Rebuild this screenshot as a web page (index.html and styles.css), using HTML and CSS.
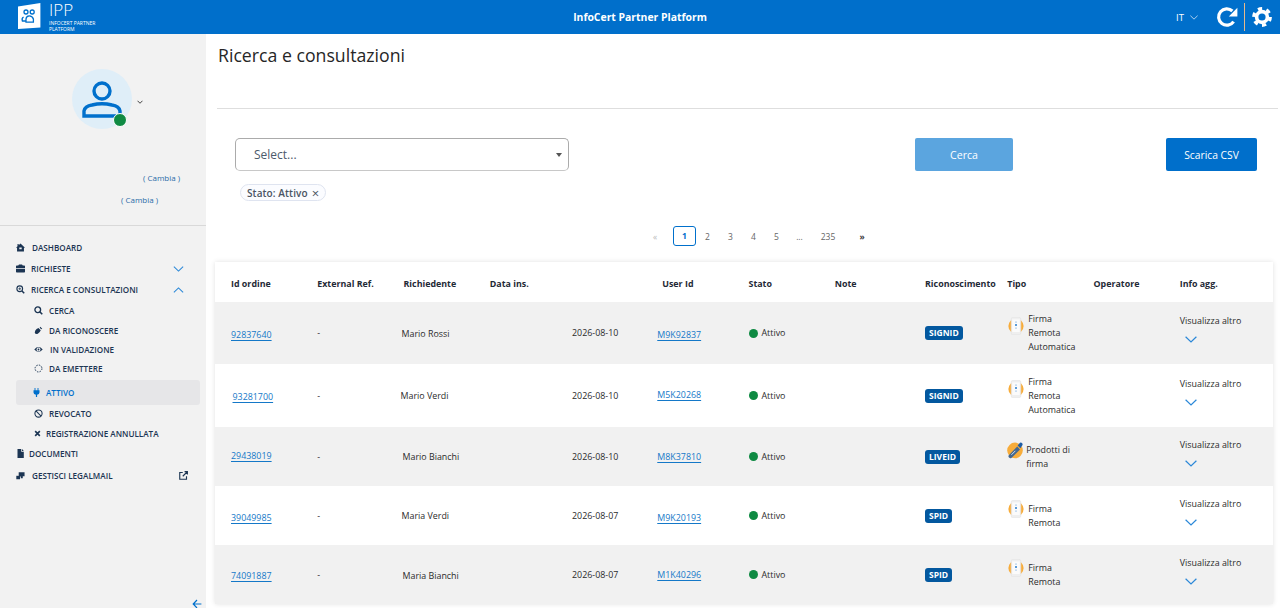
FILE: index.html
```html
<!DOCTYPE html>
<html lang="it">
<head>
    <meta charset="UTF-8">
    <meta name="viewport" content="width=device-width, initial-scale=1.0">
    <title>InfoCert Partner Platform</title>
    <link rel="stylesheet" href="styles.css">
</head>
<body>
    <svg class="defs" width="0" height="0">
        <symbol id="phone" viewBox="0 0 16 18">
            <circle cx="8" cy="9" r="7.6" fill="#f7ac3a"/>
            <rect x="3.2" y="0.4" width="9.6" height="17.2" rx="1.6" fill="#efefef" stroke="#e2e2e2" stroke-width="0.6"/>
            <rect x="4.2" y="2.4" width="7.6" height="12.6" fill="#fbfbfb"/>
            <rect x="7" y="4.6" width="2" height="1" fill="#a9c8e8"/>
            <rect x="7" y="7" width="2" height="2" fill="#5b9bd8"/>
            <rect x="7" y="10.6" width="2" height="1" fill="#a9c8e8"/>
        </symbol>
        <symbol id="usb" viewBox="0 0 16 18">
            <circle cx="8" cy="9.4" r="7.8" fill="#f7ac3a"/>
            <path d="M1.6 14.4 L10.2 5.6 L13 8.4 L4.4 17 Q3 17.6 2 16.6 Q1.2 15.6 1.6 14.4Z" fill="#44678e"/>
            <path d="M10.6 4.4 L13 1.8 Q14 1 15 2 L15.6 3 Q15.8 4 15 4.8 L13.4 7.2Z" fill="#1f5da6"/>
            <path d="M4.4 13.8 L8.4 9.8" stroke="#cfe0ef" stroke-width="1"/>
        </symbol>
        <symbol id="chev-down" viewBox="0 0 12 7">
            <path d="M0.6 0.8 L6 6 L11.4 0.8" fill="none" stroke="currentColor" stroke-width="1.2"/>
        </symbol>
        <symbol id="chev-up" viewBox="0 0 12 7">
            <path d="M0.6 6.2 L6 1 L11.4 6.2" fill="none" stroke="currentColor" stroke-width="1.2"/>
        </symbol>
    </svg>

    <header class="topbar">
        <div class="brand">
            <svg class="brand-logo" viewBox="0 0 23 26" width="23" height="26">
                <path d="M0 3.6 L22.4 0 V24.4 L0 26Z" fill="#fff"/>
                <g fill="none" stroke="#0070cc" stroke-width="1.3">
                    <circle cx="8" cy="9" r="2"/>
                    <circle cx="14.2" cy="9" r="2"/>
                    <path d="M5.6 14 Q3.4 15 4.4 18 H8"/>
                    <path d="M8 19.2 V16 Q8.4 12.8 11.2 12.8 Q14.4 12.8 15.4 16 V19.2Z"/>
                </g>
            </svg>
            <div class="brand-text">
                <div class="brand-name">IPP</div>
                <div class="brand-sub">INFOCERT PARTNER<br>PLATFORM</div>
            </div>
        </div>
        <div class="topbar-title">InfoCert Partner Platform</div>
        <div class="topbar-tools">
            <span class="lang">IT</span>
            <svg class="lang-chev" width="8" height="5"><use href="#chev-down"/></svg>
            <svg class="refresh" viewBox="0 0 22 22" width="22" height="22">
                <path d="M17.6 15.6 A8.2 8.2 0 1 1 16.4 5" fill="none" stroke="#fff" stroke-width="3.2"/>
                <path d="M21.4 1.8 V10.4 H12.8Z" fill="#fff"/>
            </svg>
            <span class="tool-sep"></span>
            <svg class="gear" viewBox="0 0 20 20" width="20" height="20">
                <circle cx="10" cy="10" r="5.4" fill="none" stroke="#fff" stroke-width="3.6"/>
                <circle cx="10" cy="10" r="8.2" fill="none" stroke="#fff" stroke-width="3.4" stroke-dasharray="4.2 4.38"/>
            </svg>
        </div>
    </header>

    <div class="layout">
        <aside class="sidebar">
            <div class="profile">
                <div class="avatar-line">
                    <div class="avatar">
                        <svg viewBox="0 0 60 60" width="60" height="60">
                            <circle cx="30" cy="22" r="8" fill="none" stroke="#0070cc" stroke-width="3.4"/>
                            <path d="M12 47 V42 Q13 37 20 36 Q30 33.5 40 36 Q47 37 48 42 V47Z" fill="none" stroke="#0070cc" stroke-width="3.4"/>
                        </svg>
                        <span class="avatar-dot"></span>
                    </div>
                    <svg class="avatar-chev" width="6" height="4" viewBox="0 0 12 7"><path d="M1 1 L6 6 L11 1" fill="none" stroke="#444" stroke-width="2"/></svg>
                </div>
                <div class="change change-a">( Cambia )</div>
                <div class="change change-b">( Cambia )</div>
            </div>

            <nav class="menu">
                <a class="item item-dash">
                    <svg class="ico" viewBox="0 0 12 12"><path d="M6 0.6 L12 6.2 H10.6 V11.4 H1.4 V6.2 H0 L2 4.4 V1.2 H3.6 V3Z M4.4 6 V8.4 H7.6 V6Z" fill-rule="evenodd"/></svg>
                    DASHBOARD
                </a>
                <a class="item item-req">
                    <svg class="ico" viewBox="0 0 12 12"><path d="M4 0.6 H8 L9 2 H11 Q12 2 12 3 V5.6 H0 V3 Q0 2 1 2 H3Z M0 6.6 H12 V10.4 Q12 11.4 11 11.4 H1 Q0 11.4 0 10.4Z"/></svg>
                    RICHIESTE
                    <svg class="item-chev" width="11" height="6"><use href="#chev-down"/></svg>
                </a>
                <a class="item item-req">
                    <svg class="ico" viewBox="0 0 12 12"><circle cx="5" cy="5" r="3.8" fill="none" stroke="currentColor" stroke-width="1.5"/><path d="M8 8 L11 11" stroke="currentColor" stroke-width="2"/><path d="M3.2 5 H6.8 M5 3.2 V6.8" stroke="currentColor"/></svg>
                    RICERCA E CONSULTAZIONI
                    <svg class="item-chev" width="11" height="6"><use href="#chev-up"/></svg>
                </a>
                <a class="sub sub-cerca">
                    <svg class="ico" viewBox="0 0 12 12"><circle cx="5" cy="5" r="3.8" fill="none" stroke="currentColor" stroke-width="1.8"/><path d="M8 8 L11 11" stroke="currentColor" stroke-width="2.2"/></svg>
                    CERCA
                </a>
                <a class="sub sub-ric">
                    <svg class="ico" viewBox="0 0 12 12"><path d="M1 9 Q1 6 3.4 4 L6 2.6 L9 5.6 Q8 8.6 5 10.4 Q2 11.4 1 9Z"/><path d="M8.4 1 L11 3.6 L9.6 4.4 L7.6 2.4Z"/></svg>
                    DA RICONOSCERE
                </a>
                <a class="sub sub-val">
                    <svg class="ico" viewBox="0 0 12 12"><path d="M0.4 6 Q6 -0.4 11.6 6 Q6 12.4 0.4 6Z M6 3.4 A2.6 2.6 0 1 0 6.01 3.4Z" fill-rule="evenodd"/><circle cx="6" cy="6" r="1.2"/></svg>
                    IN VALIDAZIONE
                </a>
                <a class="sub sub-eme">
                    <svg class="ico" viewBox="0 0 12 12"><circle cx="6" cy="6" r="4.6" fill="none" stroke="currentColor" stroke-width="1.3" stroke-dasharray="2 1.6"/></svg>
                    DA EMETTERE
                </a>
                <a class="sub sub-active">
                    <svg class="ico" viewBox="0 0 12 12"><path d="M3.4 0 H4.6 V3 H7.4 V0 H8.6 V3 H10 V6 Q10 8.4 6.8 9 V12 H5.2 V9 Q2 8.4 2 6 V3 H3.4Z"/></svg>
                    ATTIVO
                </a>
                <a class="sub sub-rev">
                    <svg class="ico" viewBox="0 0 12 12"><circle cx="6" cy="6" r="4.8" fill="none" stroke="currentColor" stroke-width="1.4"/><path d="M2.6 2.6 L9.4 9.4" stroke="currentColor" stroke-width="1.4"/></svg>
                    REVOCATO
                </a>
                <a class="sub sub-ann">
                    <svg class="ico ico-x" viewBox="0 0 12 12"><path d="M2 2 L10 10 M10 2 L2 10" stroke="currentColor" stroke-width="2.8"/></svg>
                    REGISTRAZIONE ANNULLATA
                </a>
                <a class="item item-doc">
                    <svg class="ico ico-doc" viewBox="0 0 12 12"><path d="M2 0 H7 V3.6 H10.4 V12 H2Z M8 0 L10.4 2.6 H8Z"/></svg>
                    DOCUMENTI
                </a>
                <a class="item item-dash item-legal">
                    <svg class="ico" viewBox="0 0 12 12"><path d="M3.6 1.6 H11.4 V7 H9 V9.8 H6.4 V7.2 H3.6Z"/><path d="M0.4 6.4 H5.4 V11 H0.4Z"/></svg>
                    GESTISCI LEGALMAIL
                    <svg class="item-ext" viewBox="0 0 12 12" width="9" height="9"><path d="M5 2 H1 V11 H10 V7" fill="none" stroke="currentColor" stroke-width="1.5"/><path d="M5 7 L11 1 M7.4 0.8 H11.2 V4.6" fill="none" stroke="currentColor" stroke-width="1.5"/></svg>
                </a>
            </nav>

            <svg class="collapse" viewBox="0 0 10 10" width="10" height="10"><path d="M5 1 L1.2 5 L5 9 M1.4 5 H9.4" fill="none" stroke="#0070cc" stroke-width="1.2"/></svg>
        </aside>

        <main class="content">
            <h1 class="page-title">Ricerca e consultazioni</h1>
            <div class="title-rule"></div>

            <div class="search-bar">
                <div class="select-box">
                    <span>Select...</span>
                    <i class="select-caret"></i>
                </div>
                <button class="btn btn-search">Cerca</button>
                <button class="btn btn-csv">Scarica CSV</button>
            </div>

            <div class="chips">
                <span class="chip">Stato: Attivo <b class="chip-x">&times;</b></span>
            </div>

            <div class="pager">
                <span class="pg pg-prev">&laquo;</span>
                <span class="pg pg-cur">1</span>
                <span class="pg">2</span>
                <span class="pg">3</span>
                <span class="pg">4</span>
                <span class="pg">5</span>
                <span class="pg">...</span>
                <span class="pg pg-last">235</span>
                <span class="pg pg-next">&raquo;</span>
            </div>

            <section class="orders">
                <div class="row row-head">
                    <div>Id ordine</div>
                    <div>External Ref.</div>
                    <div>Richiedente</div>
                    <div>Data ins.</div>
                    <div></div>
                    <div>User Id</div>
                    <div>Stato</div>
                    <div>Note</div>
                    <div class="c-rec">Riconoscimento</div>
                    <div>Tipo</div>
                    <div>Operatore</div>
                    <div>Info agg.</div>
                </div>

                <div class="row row-a">
                    <div class="dn2"><a class="link">92837640</a></div>
                    <div>-</div>
                    <div class="c-name dn1">Mario Rossi</div>
                    <div></div>
                    <div class="c-date">2026-08-10</div>
                    <div class="c-user dn2"><a class="link">M9K92837</a></div>
                    <div class="c-state"><i class="state-dot"></i>Attivo</div>
                    <div></div>
                    <div class="c-rec"><span class="badge">SIGNID</span></div>
                    <div class="c-tipo"><svg class="tipo-ico"><use href="#phone"/></svg><span class="tipo-text">Firma Remota Automatica</span></div>
                    <div></div>
                    <div class="c-info"><span>Visualizza altro</span><svg class="info-chev" width="12" height="7"><use href="#chev-down"/></svg></div>
                </div>

                <div class="row row-b">
                    <div class="c-shift dn1"><a class="link">93281700</a></div>
                    <div>-</div>
                    <div class="c-name c-name-b">Mario Verdi</div>
                    <div></div>
                    <div class="c-date">2026-08-10</div>
                    <div class="c-user up1"><a class="link">M5K20268</a></div>
                    <div class="c-state"><i class="state-dot"></i>Attivo</div>
                    <div></div>
                    <div class="c-rec"><span class="badge">SIGNID</span></div>
                    <div class="c-tipo"><svg class="tipo-ico"><use href="#phone"/></svg><span class="tipo-text">Firma Remota Automatica</span></div>
                    <div></div>
                    <div class="c-info"><span>Visualizza altro</span><svg class="info-chev" width="12" height="7"><use href="#chev-down"/></svg></div>
                </div>

                <div class="row row-c">
                    <div class="up1"><a class="link">29438019</a></div>
                    <div>-</div>
                    <div class="c-name c-name-c">Mario Bianchi</div>
                    <div></div>
                    <div class="c-date">2026-08-10</div>
                    <div class="c-user"><a class="link">M8K37810</a></div>
                    <div class="c-state"><i class="state-dot"></i>Attivo</div>
                    <div></div>
                    <div class="c-rec"><span class="badge">LIVEID</span></div>
                    <div class="c-tipo c-tipo-usb"><svg class="tipo-ico"><use href="#usb"/></svg><span class="tipo-text">Prodotti di firma</span></div>
                    <div></div>
                    <div class="c-info"><span>Visualizza altro</span><svg class="info-chev" width="12" height="7"><use href="#chev-down"/></svg></div>
                </div>

                <div class="row row-c">
                    <div class="dn2"><a class="link">39049985</a></div>
                    <div>-</div>
                    <div class="c-name">Maria Verdi</div>
                    <div></div>
                    <div class="c-date">2026-08-07</div>
                    <div class="c-user dn2"><a class="link">M9K20193</a></div>
                    <div class="c-state"><i class="state-dot"></i>Attivo</div>
                    <div></div>
                    <div class="c-rec"><span class="badge">SPID</span></div>
                    <div class="c-tipo"><svg class="tipo-ico"><use href="#phone"/></svg><span class="tipo-text tipo-short">Firma Remota</span></div>
                    <div></div>
                    <div class="c-info"><span>Visualizza altro</span><svg class="info-chev" width="12" height="7"><use href="#chev-down"/></svg></div>
                </div>

                <div class="row row-c">
                    <div class="dn1"><a class="link">74091887</a></div>
                    <div>-</div>
                    <div class="c-name c-name-c dn1">Maria Bianchi</div>
                    <div></div>
                    <div class="c-date">2026-08-07</div>
                    <div class="c-user"><a class="link">M1K40296</a></div>
                    <div class="c-state"><i class="state-dot"></i>Attivo</div>
                    <div></div>
                    <div class="c-rec"><span class="badge">SPID</span></div>
                    <div class="c-tipo"><svg class="tipo-ico"><use href="#phone"/></svg><span class="tipo-text tipo-short">Firma Remota</span></div>
                    <div></div>
                    <div class="c-info"><span>Visualizza altro</span><svg class="info-chev" width="12" height="7"><use href="#chev-down"/></svg></div>
                </div>
            </section>
        </main>
    </div>
</body>
</html>
```

FILE: styles.css
```css
* {
    box-sizing: border-box;
}
html, body {
    margin: 0;
    height: 608px;
    overflow: hidden;
}
body {
    font-family: "Open Sans", Arial, sans-serif;
    font-size: 8.9px;
    color: #222;
    background: #fff;
}
.defs {
    display: block;
    height: 0;
}

/* top bar */
.topbar {
    height: 34px;
    background: #006fcb;
    color: #fff;
    display: grid;
    grid-template-columns: 1fr auto 1fr;
    align-items: center;
}
.brand {
    display: flex;
    align-items: flex-start;
    padding-left: 18px;
    height: 34px;
}
.brand-logo {
    margin-top: 3px;
}
.brand-text {
    margin-left: 8px;
}
.brand-name {
    font-size: 17px;
    font-weight: 300;
    line-height: 19px;
}
.brand-sub {
    font-size: 5px;
    line-height: 6px;
    margin-top: 1px;
}
.topbar-title {
    font-size: 10.4px;
    font-weight: 700;
}
.topbar-tools {
    display: flex;
    align-items: center;
    justify-content: flex-end;
    padding-right: 8px;
}
.lang {
    font-size: 9.5px;
    font-weight: 400;
}
.lang-chev {
    margin-left: 6px;
    color: #d5e6f6;
}
.refresh {
    margin-left: 18px;
}
.tool-sep {
    width: 1px;
    height: 28px;
    background: #e6b98b;
    margin: 0 7px 0 6px;
}

.layout {
    display: flex;
    height: 574px;
}

/* sidebar */
.sidebar {
    width: 206px;
    flex: none;
    background: #f2f2f2;
    position: relative;
}
.profile {
    height: 192px;
    padding-top: 35px;
    border-bottom: 1px solid #d9d9d9;
}
.avatar-line {
    display: flex;
    align-items: center;
    padding-left: 72px;
}
.avatar {
    width: 60px;
    height: 60px;
    border-radius: 50%;
    background: #dfeef8;
    position: relative;
}
.avatar svg {
    display: block;
}
.avatar-dot {
    position: absolute;
    right: 5px;
    bottom: 2px;
    width: 14px;
    height: 14px;
    border-radius: 50%;
    background: #0f8a43;
    border: 1.5px solid #fff;
}
.avatar-chev {
    margin: 6px 0 0 5px;
}
.change {
    font-size: 8px;
    line-height: 11px;
    color: #2a6ca8;
}
.change-a {
    margin-top: 43px;
    padding-left: 143px;
}
.change-b {
    margin-top: 11px;
    padding-left: 121px;
}
.menu {
    padding: 11px 6px 0 16px;
    font-weight: 600;
    font-size: 8.15px;
    color: #1c3553;
}
.item, .sub {
    display: flex;
    align-items: center;
    position: relative;
}
.ico {
    width: 9px;
    height: 9px;
    flex: none;
    fill: currentColor;
    margin-right: 6px;
}
.item {
    height: 21px;
}
.item-dash .ico {
    margin-right: 7px;
}
.item-chev {
    margin-left: auto;
    margin-right: 16px;
    color: #2b88d8;
}
.item-ext {
    margin-left: auto;
    margin-right: 12px;
}
.item-doc {
    height: 19.6px;
}
.item-doc .ico {
    margin-right: 4px;
}
.item-legal {
    height: 24px;
}
.sub {
    height: 19.2px;
    padding-left: 18px;
}
.sub-cerca {
    height: 20.6px;
}
.sub-val .ico {
    margin-right: 7px;
}
.sub-active {
    height: 25px;
    margin: 1.6px 0 0;
    background: #e6e6e8;
    border-radius: 3px;
    color: #0070cc;
    padding-left: 16px;
}
.sub-active .ico {
    margin-right: 5px;
}
.sub-rev {
    height: 18px;
}
.sub-ann {
    height: 21px;
}
.sub-ann .ico {
    width: 7px;
    height: 7px;
    margin-right: 5px;
}
.collapse {
    position: absolute;
    left: 192px;
    bottom: -1px;
}

/* main column */
.content {
    flex: 1;
    min-width: 0;
    padding-left: 9px;
}
.page-title {
    font-size: 17.7px;
    font-weight: 400;
    color: #262626;
    line-height: 24px;
    margin: 9px 0 0 3px;
}
.title-rule {
    margin: 41px 2px 0 2px;
    border-top: 1px solid #dedede;
}
.search-bar {
    display: flex;
    margin: 29px 23px 0 20px;
    align-items: stretch;
    height: 33px;
}
.select-box {
    width: 333.5px;
    border: 1px solid #ababab;
    border-bottom-color: #c8c8c8;
    border-radius: 5px;
    display: flex;
    align-items: center;
    padding: 0 6px 0 18px;
    font-size: 12px;
    color: #4c5a6b;
}
.select-caret {
    margin-left: auto;
    border: 3.5px solid transparent;
    border-top: 4px solid #555;
    border-bottom: 0;
}
.btn {
    border: none;
    border-radius: 2px;
    color: #fff;
    font-family: inherit;
    font-size: 10.3px;
    font-weight: 400;
    padding: 0;
}
.btn-search {
    width: 98px;
    margin-left: 346.5px;
    background: #5ba5df;
    font-size: 10.6px;
}
.btn-csv {
    width: 91px;
    margin-left: auto;
    background: #006fcb;
}
.chips {
    margin: 13px 0 0 25px;
    height: 17px;
}
.chip {
    display: inline-flex;
    align-items: center;
    height: 17px;
    padding: 0 6px;
    border: 1px solid #dfe4f0;
    border-radius: 9px;
    background: #fbfcff;
    font-size: 10px;
    font-weight: 600;
    color: #4a5563;
    letter-spacing: 0.1px;
}
.chip-x {
    margin-left: 4px;
    font-weight: 400;
    font-size: 13px;
    line-height: 10px;
}
.pager {
    display: flex;
    align-items: center;
    height: 20px;
    margin: 25px 0 0 425px;
    font-size: 8.5px;
    color: #666;
}
.pg {
    width: 23px;
    text-align: center;
}
.pg-prev {
    width: 33px;
    color: #bbb;
    padding-right: 3px;
}
.pg-cur {
    height: 20px;
    line-height: 18px;
    border: 1px solid #0070cc;
    border-radius: 3px;
    color: #0070cc;
    font-weight: 700;
}
.pg-last {
    width: 34px;
}
.pg-next {
    margin-left: 1px;
    width: 32px;
    color: #3a3a3a;
    font-weight: 700;
}

/* orders table */
.orders {
    margin: 16px 7px 0 0;
    box-shadow: 0 0 5px rgba(0, 0, 0, 0.12);
    height: 342px;
}
.row {
    display: grid;
    grid-template-columns: repeat(12, 86.25px);
    padding-left: 16px;
    align-items: center;
    line-height: 14px;
    color: #2b2b2b;
}
.row-head {
    height: 40px;
    padding-top: 4px;
    font-weight: 700;
    color: #1f2a36;
    white-space: nowrap;
}
.row-a {
    height: 62px;
}
.row-b {
    height: 63px;
}
.row-c {
    height: 59px;
}
.row:nth-child(even) {
    background: #f1f1f1;
}
.link {
    color: #1478c8;
    text-decoration: underline;
    text-underline-offset: 2px;
}
/* the rows of the table are not quite level in the source */
.dn1 {
    margin-top: 2px;
}
.dn2 {
    margin-top: 4px;
}
.up1 {
    margin-bottom: 2px;
}
.c-shift {
    padding-left: 1.5px;
}
.c-name {
    margin-left: -2px;
    white-space: nowrap;
}
.c-name-b {
    margin-left: -3px;
}
.c-name-c {
    margin-left: -1px;
}
.c-date {
    margin-left: -4px;
    white-space: nowrap;
}
.c-user {
    margin-left: -5px;
}
.c-rec {
    margin-left: 4px;
}
.c-state {
    display: flex;
    align-items: center;
}
.state-dot {
    width: 9px;
    height: 9px;
    border-radius: 50%;
    background: #0f8a43;
    margin-right: 4px;
}
.badge {
    display: inline-block;
    background: #03589f;
    color: #fff;
    font-weight: 700;
    font-size: 8.5px;
    line-height: 14px;
    padding: 0 4px;
    border-radius: 3px;
}
.c-tipo {
    display: flex;
    align-items: center;
}
.tipo-ico {
    width: 16px;
    height: 18px;
    flex: none;
    margin: -14px 4px 0 1px;
}
.tipo-text {
    width: 54px;
}
.tipo-short {
    width: 40px;
}
.c-tipo-usb .tipo-ico {
    margin: -14px 3px 0 0;
}
.c-info {
    white-space: nowrap;
    display: flex;
    flex-direction: column;
    align-items: flex-start;
    margin-bottom: 9px;
}
.info-chev {
    color: #2b88d8;
    margin: 8px 0 0 5px;
}
```
